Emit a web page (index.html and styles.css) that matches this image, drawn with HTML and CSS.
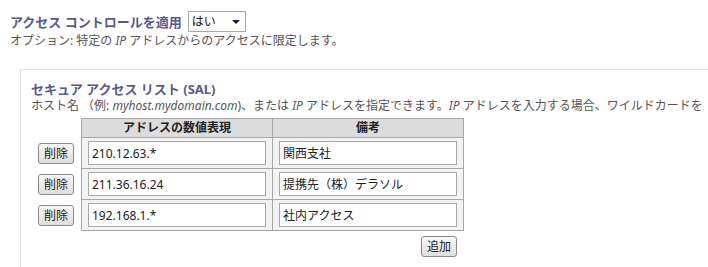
FILE: index.html
```html
<!DOCTYPE html>
<html lang="ja">
<head>
<meta charset="utf-8">
<link rel="stylesheet" href="styles.css">
</head>
<body>
<div class="page">
  <div class="ac-row">
    <label class="ac-title" for="ac">アクセス コントロールを適用</label>
    <span class="select-wrap">
      <select id="ac" class="select"><option>はい</option><option>いいえ</option></select>
    </span>
  </div>
  <p class="desc">オプション: 特定の <i>IP</i> アドレスからのアクセスに限定します。</p>

  <section class="panel">
    <h2 class="sec-title">セキュア アクセス リスト (SAL)</h2>
    <p class="help">ホスト名 （例: <i>myhost.mydomain.com</i>)、または <i>IP</i> アドレスを指定できます。<i>IP</i> アドレスを入力する場合、ワイルドカードを</p>
    <table class="sal">
      <thead>
        <tr><th class="act"></th><th class="col">アドレスの数値表現</th><th class="col">備考</th></tr>
      </thead>
      <tbody>
        <tr><td class="act"><button class="btn">削除</button></td><td><input class="field" value="210.12.63.*"></td><td><input class="field" value="関西支社"></td></tr>
        <tr><td class="act"><button class="btn">削除</button></td><td><input class="field" value="211.36.16.24"></td><td><input class="field" value="提携先（株）デラソル"></td></tr>
        <tr><td class="act"><button class="btn">削除</button></td><td><input class="field" value="192.168.1.*"></td><td><input class="field" value="社内アクセス"></td></tr>
      </tbody>
    </table>
    <div class="add-row"><button class="btn">追加</button></div>
  </section>
</div>
</body>
</html>
```

FILE: styles.css
```css
html, body {
  margin: 0;
  padding: 0;
  background: #fff;
  overflow: hidden;
}
body {
  font-family: "Noto Sans", "Noto Sans CJK JP", sans-serif;
  font-size: 12px;
  color: #555;
}
.page {
  padding: 11px 0 0 10px;
}
.ac-row {
  display: flex;
  align-items: center;
  gap: 6px;
  height: 21px;
}
.ac-title {
  font-size: 13px;
  font-weight: bold;
  color: #5a5a8c;
  line-height: 18px;
}
.select-wrap {
  position: relative;
  display: inline-block;
  height: 21px;
}
.select-wrap::after {
  content: "";
  position: absolute;
  right: 6px;
  top: 9px;
  border-left: 4px solid transparent;
  border-right: 4px solid transparent;
  border-top: 4px solid #141450;
  pointer-events: none;
}
.select {
  appearance: none;
  -webkit-appearance: none;
  display: block;
  width: 58px;
  height: 21px;
  border: 1px solid #a8a8a8;
  border-radius: 0;
  background: #fff;
  font-family: inherit;
  font-size: 12px;
  color: #111;
  padding: 0 0 0 3px;
  margin: 0;
}
.desc {
  margin: 1px 0 0 0;
  line-height: 16px;
}
.panel {
  margin: 20px 0 0 10px;
  border-top: 1px solid #e2e2e2;
  border-left: 1px solid #dcdcdc;
  padding: 10px 0 20px 10px;
}
.sec-title {
  margin: 0;
  font-size: 13px;
  font-weight: bold;
  color: #5a5a8c;
  line-height: 18px;
}
.help {
  margin: 0;
  line-height: 16px;
  white-space: nowrap;
}
.sal {
  border-collapse: collapse;
  margin-top: 4px;
}
.sal th.col {
  width: 178px;
  height: 18px;
  padding: 0 6px;
  background: #dcdcdc;
  border: 1px solid #a8a8a8;
  color: #222;
  font-weight: bold;
  font-size: 12px;
  line-height: 16px;
  text-align: center;
}
.sal td {
  background: #f3f3f3;
  border: 1px solid #a8a8a8;
  padding: 3px 6px 3px 6px;
  height: 24px;
}
.sal .act {
  width: 50px;
  padding: 0;
  background: transparent;
  border: none;
  text-align: center;
}
.sal td.act {
  background: transparent;
  border: none;
  padding: 0;
}
.field {
  box-sizing: border-box;
  width: 178px;
  height: 24px;
  border: 1px solid #a8a8a8;
  background: #fff;
  font-family: inherit;
  font-size: 12px;
  color: #222;
  padding: 0 3px;
  margin: 0;
  display: block;
}
.btn {
  box-sizing: border-box;
  height: 21px;
  padding: 0 5px;
  border: 1px solid #8a8a8a;
  border-radius: 3px;
  background: linear-gradient(#f8f8f8, #dedede);
  font-family: inherit;
  font-size: 12px;
  color: #222;
  line-height: 19px;
  margin: 0;
}
.add-row {
  width: 426px;
  display: flex;
  justify-content: flex-end;
  margin-top: 5px;
}
```
